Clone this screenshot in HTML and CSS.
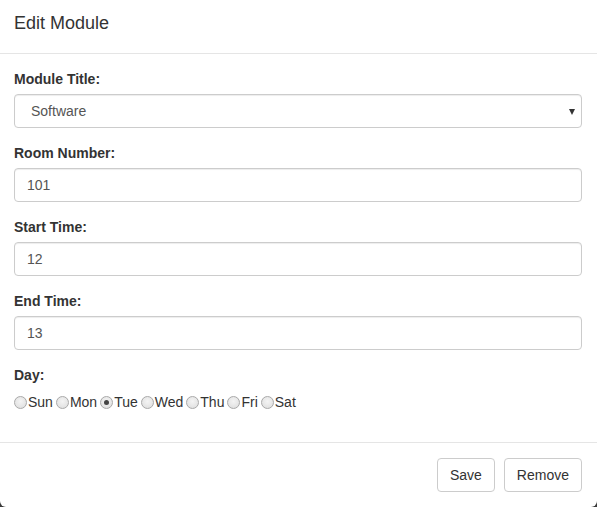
FILE: index.html
```html
<!DOCTYPE html>
<html>
<head>
<meta charset="utf-8">
<link rel="stylesheet" href="styles.css">
</head>
<body>
<div class="modal">
  <div class="modal-header">
    <h4 class="modal-title">Edit Module</h4>
  </div>
  <div class="modal-body">
    <div class="form-group">
      <label class="control-label">Module Title:</label>
      <div class="select-wrap">
        <select class="form-control"><option>Software</option></select>
        <span class="caret"></span>
      </div>
    </div>
    <div class="form-group">
      <label class="control-label">Room Number:</label>
      <input class="form-control" type="text" value="101">
    </div>
    <div class="form-group">
      <label class="control-label">Start Time:</label>
      <input class="form-control" type="text" value="12">
    </div>
    <div class="form-group">
      <label class="control-label">End Time:</label>
      <input class="form-control" type="text" value="13">
    </div>
    <div class="form-group last">
      <label class="control-label">Day:</label>
      <div class="days">
        <label class="day"><input type="radio" name="day"><span>Sun</span></label>
        <label class="day"><input type="radio" name="day"><span>Mon</span></label>
        <label class="day"><input type="radio" name="day" checked><span>Tue</span></label>
        <label class="day"><input type="radio" name="day"><span>Wed</span></label>
        <label class="day"><input type="radio" name="day"><span>Thu</span></label>
        <label class="day"><input type="radio" name="day"><span>Fri</span></label>
        <label class="day"><input type="radio" name="day"><span>Sat</span></label>
      </div>
    </div>
  </div>
  <div class="modal-footer">
    <button class="btn">Save</button>
    <button class="btn">Remove</button>
  </div>
</div>
</body>
</html>
```
FILE: styles.css
```css
* { box-sizing: border-box; }
html, body {
  margin: 0;
  padding: 0;
  background: #3a3a3a;
}
body {
  font-family: "Liberation Sans", Arial, sans-serif;
  font-size: 14px;
  line-height: 1.42857;
  color: #333;
  width: 597px;
  height: 507px;
  overflow: hidden;
}
.modal {
  background: #fff;
  width: 597px;
  height: 507px;
  border-radius: 0 0 6px 6px;
  overflow: hidden;
}
.modal-header {
  height: 54px;
  padding: 11px 14px 0;
  border-bottom: 1px solid #e5e5e5;
}
.modal-title {
  margin: 0;
  font-size: 18px;
  font-weight: normal;
  line-height: 25.7px;
  color: #333;
}
.modal-body {
  padding: 15px 14px;
  height: 388px;
}
.form-group {
  margin-bottom: 15px;
}
.form-group.last {
  margin-bottom: 0;
}
.control-label {
  display: block;
  font-weight: bold;
  height: 20px;
  line-height: 20px;
  margin-bottom: 5px;
}
.form-control {
  display: block;
  width: 568px;
  height: 34px;
  padding: 6px 12px;
  font-family: inherit;
  font-size: 14px;
  line-height: 20px;
  color: #555;
  background: #fff;
  border: 1px solid #ccc;
  border-radius: 4px;
  box-shadow: inset 0 1px 1px rgba(0,0,0,.075);
  outline: none;
}
.select-wrap {
  position: relative;
}
select.form-control {
  -webkit-appearance: none;
  appearance: none;
  padding-left: 16px;
}
.caret {
  position: absolute;
  right: 8px;
  top: 15px;
  width: 0;
  height: 0;
  border-left: 3.5px solid transparent;
  border-right: 3.5px solid transparent;
  border-top: 6px solid #333;
  pointer-events: none;
}
.days {
  display: flex;
  height: 20px;
  margin-top: 7px;
  align-items: center;
}
.day {
  display: flex;
  align-items: center;
  margin-right: 3px;
  line-height: 20px;
}
.day span {
  margin-left: 1px;
}
.day input {
  -webkit-appearance: none;
  appearance: none;
  width: 13px;
  height: 13px;
  margin: 1px 0 0;
  border: 1px solid #a9a9a9;
  border-radius: 50%;
  background: radial-gradient(circle at 50% 40%, #f4f4f4 0%, #dcdcdc 100%);
  position: relative;
}
.day input:checked::after {
  content: "";
  position: absolute;
  left: 3px;
  top: 3px;
  width: 5px;
  height: 5px;
  border-radius: 50%;
  background: #444;
}
.modal-footer {
  border-top: 1px solid #e5e5e5;
  padding: 15px 15px 15px;
  display: flex;
  justify-content: flex-end;
  gap: 9px;
}
.btn {
  height: 34px;
  padding: 6px 12px;
  font-family: inherit;
  font-size: 14px;
  line-height: 20px;
  color: #333;
  background: #fff;
  border: 1px solid #ccc;
  border-radius: 4px;
}
```
